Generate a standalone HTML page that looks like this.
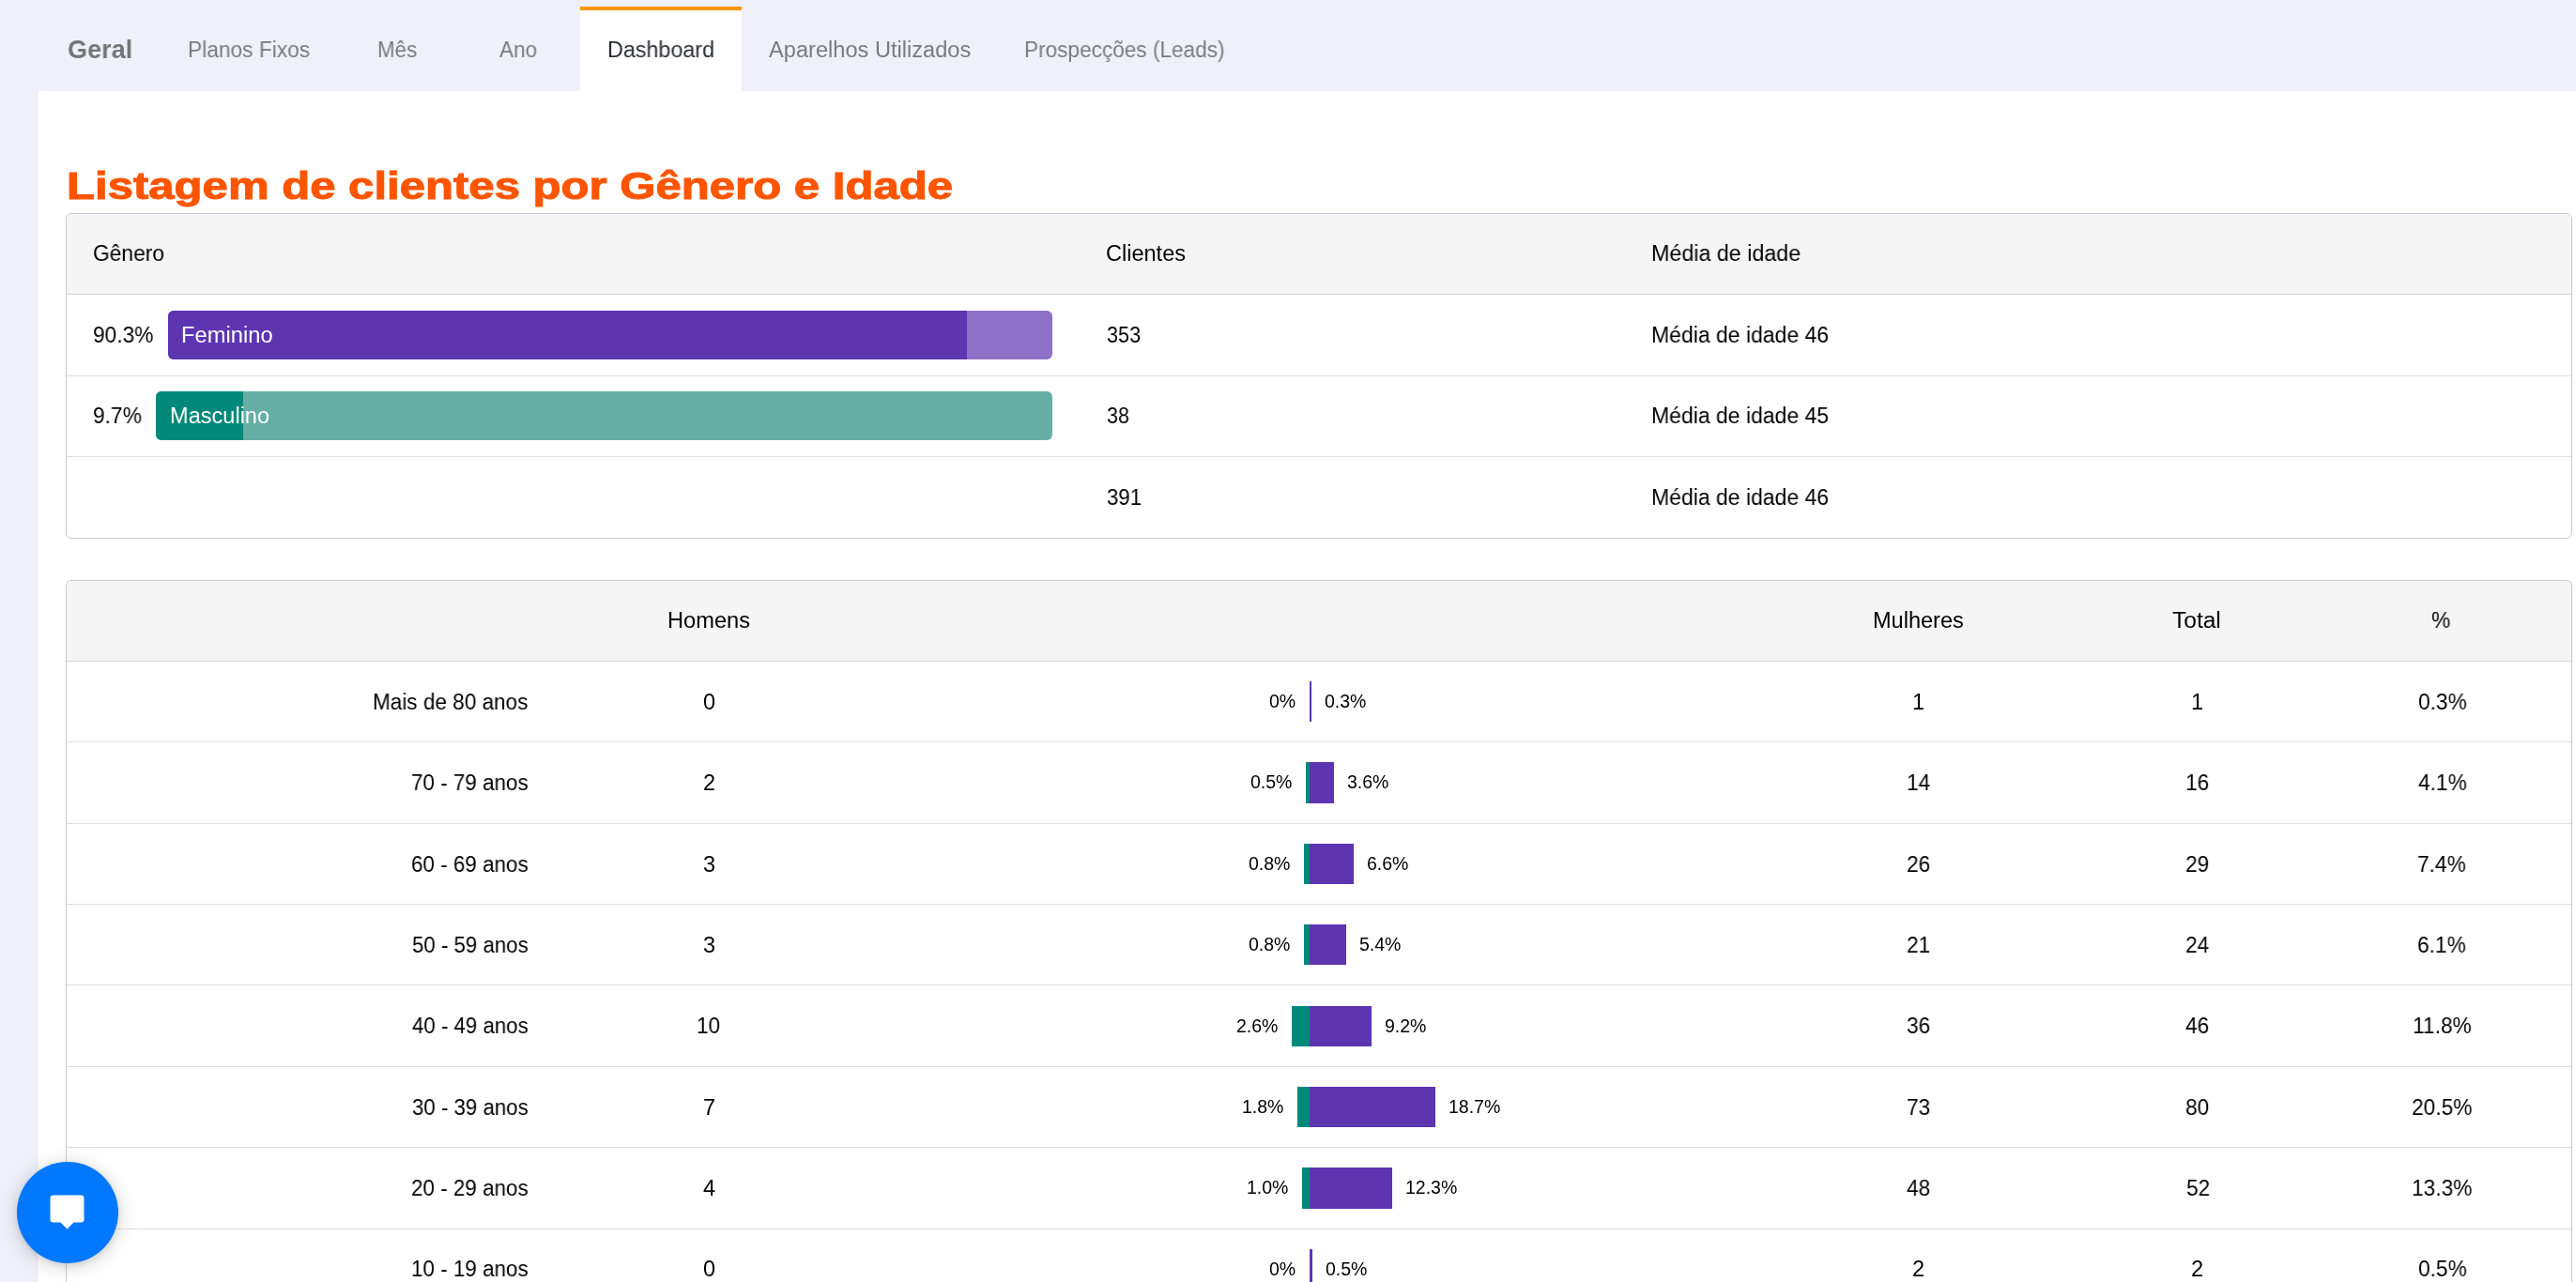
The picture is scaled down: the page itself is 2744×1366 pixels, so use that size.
<!DOCTYPE html>
<html lang="pt-br"><head><meta charset="utf-8"><title>Listagem de clientes por Gênero e Idade</title>
<style>
html,body{margin:0;padding:0}
html{overflow:hidden;width:2744px;height:1366px;background:#f0f0fa}
body{width:2744px;height:1366px;overflow:hidden;background:#f0f0fa;position:relative;font-family:"Liberation Sans",sans-serif;color:#000}
div{position:absolute}
nav,main,section{display:block;margin:0;padding:0}
h1{margin:0}
a{text-decoration:none}
.t{position:absolute;will-change:transform;white-space:pre;line-height:1;transform-origin:0 0;font-family:"Liberation Sans",sans-serif;font-weight:400}
.panel{background:#ffffff}
.tab-active{background:#ffffff;border-top:4px solid #ff9500;box-sizing:border-box}
.card{box-sizing:border-box;border:1px solid #c7c7d3;border-radius:6px;background:#fff;overflow:hidden}
.card.open{border-bottom:0;border-radius:6px 6px 0 0}
.thead{left:0;top:0;width:100%;height:85px;background:#f5f5f5}
.sep-h{background:#d6d6d9}
.sep{background:#dfdfdf}
.bar{border-radius:6px;overflow:hidden}
.pur{background:#5e35b1}.purl{background:#8e72c8}.teal{background:#00897b}.teall{background:#66aea3}
.chat{border-radius:50%;background:#0078ff;box-shadow:0 3px 22px rgba(0,0,0,.17),0 2px 7px rgba(0,0,0,.10)}
.chat svg{position:absolute;left:0;top:0}
</style></head>
<body>
<!-- page panel -->
<div class="panel" style="left:41px;top:97px;width:2703px;height:1269px;"></div>
<nav class="tabs">
<div class="tab-active" style="left:618px;top:7px;width:172px;height:90px;"></div>
<a class="t" style="left:72.02px;top:39.00px;font-size:27.5px;transform:scaleX(0.9826);color:#757578;font-weight:700;">Geral</a>
<a class="t" style="left:199.53px;top:42.00px;font-size:23.5px;transform:scaleX(0.9678);color:#7a7a7d;">Planos Fixos</a>
<a class="t" style="left:402.05px;top:42.00px;font-size:23.5px;transform:scaleX(0.9497);color:#7a7a7d;">Mês</a>
<a class="t" style="left:532.00px;top:42.00px;font-size:23.5px;transform:scaleX(0.9582);color:#7a7a7d;">Ano</a>
<a class="t" style="left:647.01px;top:42.00px;font-size:23.5px;transform:scaleX(0.9921);color:#2b2f34;">Dashboard</a>
<a class="t" style="left:819.00px;top:42.00px;font-size:23.5px;transform:scaleX(1.0048);color:#7a7a7d;">Aparelhos Utilizados</a>
<a class="t" style="left:1091.29px;top:42.00px;font-size:23.5px;transform:scaleX(0.9615);color:#7a7a7d;">Prospecções (Leads)</a>
</nav>
<main>
<h1 class="t" style="left:70.55px;top:178.20px;font-size:40px;transform:scaleX(1.2274);color:#ff5500;font-weight:700;-webkit-text-stroke:1px #ff5500;">Listagem de clientes por Gênero e Idade</h1>
<section class="gender-table">
<div class="card" style="left:70px;top:227px;width:2670px;height:347px"><div class="thead"></div></div>
<div class="sep-h" style="left:71px;top:313px;width:2668px;height:1px;"></div><div class="sep" style="left:71px;top:400px;width:2668px;height:1px;"></div><div class="sep" style="left:71px;top:486px;width:2668px;height:1px;"></div>
<div class="bar purl" style="left:179px;top:331px;width:942px;height:52px"><div class="pur" style="left:0;top:0;width:851px;height:52px"></div></div>
<div class="bar teall" style="left:166px;top:417px;width:955px;height:52px"><div class="teal" style="left:0;top:0;width:93px;height:52px"></div></div>
<span class="t" style="left:99.03px;top:259.00px;font-size:23.5px;transform:scaleX(0.9701);">Gênero</span>
<span class="t" style="left:1178.25px;top:259.00px;font-size:23.5px;transform:scaleX(1.0012);">Clientes</span>
<span class="t" style="left:1758.51px;top:259.00px;font-size:23.5px;transform:scaleX(0.9898);">Média de idade</span>
<span class="t" style="left:99.03px;top:346.00px;font-size:23.5px;transform:scaleX(0.9660);">90.3%</span>
<span class="t" style="left:193.49px;top:346.00px;font-size:23.5px;transform:scaleX(1.0096);color:#fff;">Feminino</span>
<span class="t" style="left:1179.00px;top:346.00px;font-size:23.5px;transform:scaleX(0.9198);">353</span>
<span class="t" style="left:1758.52px;top:346.00px;font-size:23.5px;transform:scaleX(0.9776);">Média de idade 46</span>
<span class="t" style="left:99.03px;top:432.00px;font-size:23.5px;transform:scaleX(0.9683);">9.7%</span>
<span class="t" style="left:180.50px;top:432.00px;font-size:23.5px;transform:scaleX(1.0026);color:#fff;">Masculino</span>
<span class="t" style="left:1179.00px;top:432.00px;font-size:23.5px;transform:scaleX(0.9206);">38</span>
<span class="t" style="left:1758.52px;top:432.00px;font-size:23.5px;transform:scaleX(0.9776);">Média de idade 45</span>
<span class="t" style="left:1179.00px;top:518.50px;font-size:23.5px;transform:scaleX(0.9439);">391</span>
<span class="t" style="left:1758.52px;top:518.50px;font-size:23.5px;transform:scaleX(0.9776);">Média de idade 46</span>
</section>
<section class="age-table">
<div class="card open" style="left:70px;top:618px;width:2670px;height:748px"><div class="thead"></div></div>
<div class="sep-h" style="left:71px;top:704px;width:2668px;height:1px;"></div><div class="sep" style="left:71px;top:790px;width:2668px;height:1px;"></div><div class="sep" style="left:71px;top:877px;width:2668px;height:1px;"></div><div class="sep" style="left:71px;top:963px;width:2668px;height:1px;"></div><div class="sep" style="left:71px;top:1049px;width:2668px;height:1px;"></div><div class="sep" style="left:71px;top:1136px;width:2668px;height:1px;"></div><div class="sep" style="left:71px;top:1222px;width:2668px;height:1px;"></div><div class="sep" style="left:71px;top:1309px;width:2668px;height:1px;"></div>
<div class="pur" style="left:1395px;top:726px;width:2px;height:43px;"></div>
<div class="teal" style="left:1391px;top:812px;width:4px;height:44px;"></div><div class="pur" style="left:1395px;top:812px;width:26px;height:44px;"></div>
<div class="teal" style="left:1389px;top:899px;width:6px;height:43px;"></div><div class="pur" style="left:1395px;top:899px;width:47px;height:43px;"></div>
<div class="teal" style="left:1389px;top:985px;width:6px;height:43px;"></div><div class="pur" style="left:1395px;top:985px;width:39px;height:43px;"></div>
<div class="teal" style="left:1376px;top:1072px;width:19px;height:43px;"></div><div class="pur" style="left:1395px;top:1072px;width:66px;height:43px;"></div>
<div class="teal" style="left:1382px;top:1158px;width:13px;height:43px;"></div><div class="pur" style="left:1395px;top:1158px;width:134px;height:43px;"></div>
<div class="teal" style="left:1387px;top:1244px;width:8px;height:44px;"></div><div class="pur" style="left:1395px;top:1244px;width:88px;height:44px;"></div>
<div class="pur" style="left:1395px;top:1331px;width:3px;height:35px;"></div>
<span class="t" style="left:710.99px;top:650.00px;font-size:23.5px;transform:scaleX(1.0058);">Homens</span>
<span class="t" style="left:1994.50px;top:650.00px;font-size:23.5px;transform:scaleX(1.0010);">Mulheres</span>
<span class="t" style="left:2314.30px;top:650.00px;font-size:23.5px;transform:scaleX(1.0430);">Total</span>
<span class="t" style="left:2590.20px;top:650.00px;font-size:23.5px;transform:scaleX(0.9667);">%</span>
<span class="t" style="left:397.29px;top:737.00px;font-size:23.5px;transform:scaleX(0.9593);">Mais de 80 anos</span>
<span class="t" style="left:748.63px;top:737.00px;font-size:23.5px;transform:scaleX(0.9650);">0</span>
<span class="t" style="left:2037.43px;top:737.00px;font-size:23.5px;transform:scaleX(0.9650);">1</span>
<span class="t" style="left:2334.43px;top:737.00px;font-size:23.5px;transform:scaleX(0.9650);">1</span>
<span class="t" style="left:2575.81px;top:737.00px;font-size:23.5px;transform:scaleX(0.9650);">0.3%</span>
<span class="t" style="left:1352.32px;top:738.00px;font-size:19.5px;transform:scaleX(1.0000);">0%</span>
<span class="t" style="left:1410.50px;top:738.00px;font-size:19.5px;transform:scaleX(1.0000);">0.3%</span>
<span class="t" style="left:438.05px;top:823.00px;font-size:23.5px;transform:scaleX(0.9542);">70 - 79 anos</span>
<span class="t" style="left:748.63px;top:823.00px;font-size:23.5px;transform:scaleX(0.9650);">2</span>
<span class="t" style="left:2030.64px;top:823.00px;font-size:23.5px;transform:scaleX(0.9650);">14</span>
<span class="t" style="left:2327.64px;top:823.00px;font-size:23.5px;transform:scaleX(0.9650);">16</span>
<span class="t" style="left:2575.81px;top:823.00px;font-size:23.5px;transform:scaleX(0.9650);">4.1%</span>
<span class="t" style="left:1332.05px;top:824.00px;font-size:19.5px;transform:scaleX(1.0000);">0.5%</span>
<span class="t" style="left:1434.50px;top:824.00px;font-size:19.5px;transform:scaleX(1.0000);">3.6%</span>
<span class="t" style="left:438.05px;top:910.00px;font-size:23.5px;transform:scaleX(0.9542);">60 - 69 anos</span>
<span class="t" style="left:748.63px;top:910.00px;font-size:23.5px;transform:scaleX(0.9650);">3</span>
<span class="t" style="left:2030.64px;top:910.00px;font-size:23.5px;transform:scaleX(0.9650);">26</span>
<span class="t" style="left:2328.12px;top:910.00px;font-size:23.5px;transform:scaleX(0.9650);">29</span>
<span class="t" style="left:2575.32px;top:910.00px;font-size:23.5px;transform:scaleX(0.9650);">7.4%</span>
<span class="t" style="left:1330.05px;top:911.00px;font-size:19.5px;transform:scaleX(1.0000);">0.8%</span>
<span class="t" style="left:1455.50px;top:911.00px;font-size:19.5px;transform:scaleX(1.0000);">6.6%</span>
<span class="t" style="left:439.00px;top:996.00px;font-size:23.5px;transform:scaleX(0.9469);">50 - 59 anos</span>
<span class="t" style="left:748.63px;top:996.00px;font-size:23.5px;transform:scaleX(0.9650);">3</span>
<span class="t" style="left:2031.12px;top:996.00px;font-size:23.5px;transform:scaleX(0.9650);">21</span>
<span class="t" style="left:2327.64px;top:996.00px;font-size:23.5px;transform:scaleX(0.9650);">24</span>
<span class="t" style="left:2575.32px;top:996.00px;font-size:23.5px;transform:scaleX(0.9650);">6.1%</span>
<span class="t" style="left:1330.05px;top:997.00px;font-size:19.5px;transform:scaleX(1.0000);">0.8%</span>
<span class="t" style="left:1447.50px;top:997.00px;font-size:19.5px;transform:scaleX(1.0000);">5.4%</span>
<span class="t" style="left:439.00px;top:1082.00px;font-size:23.5px;transform:scaleX(0.9469);">40 - 49 anos</span>
<span class="t" style="left:741.84px;top:1082.00px;font-size:23.5px;transform:scaleX(0.9650);">10</span>
<span class="t" style="left:2031.12px;top:1082.00px;font-size:23.5px;transform:scaleX(0.9650);">36</span>
<span class="t" style="left:2328.12px;top:1082.00px;font-size:23.5px;transform:scaleX(0.9650);">46</span>
<span class="t" style="left:2569.86px;top:1082.00px;font-size:23.5px;transform:scaleX(0.9650);">11.8%</span>
<span class="t" style="left:1317.05px;top:1084.00px;font-size:19.5px;transform:scaleX(1.0000);">2.6%</span>
<span class="t" style="left:1474.50px;top:1084.00px;font-size:19.5px;transform:scaleX(1.0000);">9.2%</span>
<span class="t" style="left:439.00px;top:1169.00px;font-size:23.5px;transform:scaleX(0.9469);">30 - 39 anos</span>
<span class="t" style="left:748.63px;top:1169.00px;font-size:23.5px;transform:scaleX(0.9650);">7</span>
<span class="t" style="left:2030.64px;top:1169.00px;font-size:23.5px;transform:scaleX(0.9650);">73</span>
<span class="t" style="left:2327.64px;top:1169.00px;font-size:23.5px;transform:scaleX(0.9650);">80</span>
<span class="t" style="left:2569.02px;top:1169.00px;font-size:23.5px;transform:scaleX(0.9650);">20.5%</span>
<span class="t" style="left:1323.05px;top:1170.00px;font-size:19.5px;transform:scaleX(1.0000);">1.8%</span>
<span class="t" style="left:1542.50px;top:1170.00px;font-size:19.5px;transform:scaleX(1.0000);">18.7%</span>
<span class="t" style="left:438.05px;top:1255.00px;font-size:23.5px;transform:scaleX(0.9542);">20 - 29 anos</span>
<span class="t" style="left:748.63px;top:1255.00px;font-size:23.5px;transform:scaleX(0.9650);">4</span>
<span class="t" style="left:2031.12px;top:1255.00px;font-size:23.5px;transform:scaleX(0.9650);">48</span>
<span class="t" style="left:2328.60px;top:1255.00px;font-size:23.5px;transform:scaleX(0.9650);">52</span>
<span class="t" style="left:2569.02px;top:1255.00px;font-size:23.5px;transform:scaleX(0.9650);">13.3%</span>
<span class="t" style="left:1328.05px;top:1256.00px;font-size:19.5px;transform:scaleX(1.0000);">1.0%</span>
<span class="t" style="left:1496.50px;top:1256.00px;font-size:19.5px;transform:scaleX(1.0000);">12.3%</span>
<span class="t" style="left:438.05px;top:1341.00px;font-size:23.5px;transform:scaleX(0.9542);">10 - 19 anos</span>
<span class="t" style="left:748.63px;top:1341.00px;font-size:23.5px;transform:scaleX(0.9650);">0</span>
<span class="t" style="left:2037.43px;top:1341.00px;font-size:23.5px;transform:scaleX(0.9650);">2</span>
<span class="t" style="left:2334.43px;top:1341.00px;font-size:23.5px;transform:scaleX(0.9650);">2</span>
<span class="t" style="left:2575.81px;top:1341.00px;font-size:23.5px;transform:scaleX(0.9650);">0.5%</span>
<span class="t" style="left:1352.32px;top:1343.00px;font-size:19.5px;transform:scaleX(1.0000);">0%</span>
<span class="t" style="left:1411.50px;top:1343.00px;font-size:19.5px;transform:scaleX(1.0000);">0.5%</span>
</section>
</main>
<div class="chat" style="left:18px;top:1238px;width:108px;height:108px"><svg width="108" height="108" viewBox="0 0 108 108"><path d="M38.5 35.5h30a3 3 0 0 1 3 3v23a3 3 0 0 1-3 3h-8l-7 7-7-7h-8a3 3 0 0 1-3-3v-23a3 3 0 0 1 3-3z" fill="#fff"/></svg></div>
</body></html>
